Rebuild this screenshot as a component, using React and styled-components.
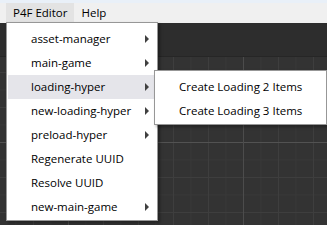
import React from "react"
import styled, { createGlobalStyle } from "styled-components"

const Global = createGlobalStyle`
  html, body {
    margin: 0;
    padding: 0;
    width: 327px;
    height: 225px;
    overflow: hidden;
    background: #333;
  }
  * { box-sizing: border-box; }
`

const Window = styled.div`
  position: relative;
  width: 327px;
  height: 225px;
  display: flex;
  flex-direction: column;
  font-family: "Segoe UI", "Open Sans", "Noto Sans", sans-serif;
  font-size: 11.5px;
  color: #000;
`
const TitleStrip = styled.div`
  height: 3px;
  background: #e9f0f8;
`
const MenuBar = styled.div`
  height: 20px;
  background: #f0f0f0;
  display: flex;
  align-items: stretch;
  padding-left: 6px;
`
const MenuButton = styled.div`
  display: flex;
  align-items: center;
  padding: 0 7px 1px 7px;
  background: ${p => (p.$open ? "#e3e3e3" : "transparent")};
`
const Toolbar = styled.div`
  height: 34px;
  background: #2d2d2d;
  border-bottom: 1px solid #262626;
`
const Canvas = styled.div`
  flex: 1;
  background-color: #333;
  background-image:
    linear-gradient(to right, #4c4c4c 1px, transparent 1px),
    linear-gradient(to bottom, #525252 1px, transparent 1px),
    linear-gradient(to right, #3e3e3e 1px, transparent 1px),
    linear-gradient(to bottom, #3e3e3e 1px, transparent 1px),
    linear-gradient(to right, #383838 1px, transparent 1px),
    linear-gradient(to bottom, #383838 1px, transparent 1px);
  background-size:
    175px 100%, 100% 175px,
    35px 100%, 100% 35px,
    17.5px 100%, 100% 17.5px;
  background-position:
    68px 0, 0 85px,
    33px 0, 0 15px,
    15.5px 0, 0 15px;
`
const Dropdown = styled.div`
  position: absolute;
  left: ${p => p.$left}px;
  top: ${p => p.$top}px;
  width: ${p => p.$width}px;
  background: #fff;
  border: 1px solid #979797;
  box-shadow: 2px 2px 3px rgba(0, 0, 0, 0.35);
  padding: 4px 1px 1px 1px;
  display: flex;
  flex-direction: column;
`
const Item = styled.div`
  height: 24px;
  display: flex;
  align-items: center;
  justify-content: space-between;
  padding: 0 7px 1px 23px;
  background: ${p => (p.$hover ? "#e5e5ea" : "transparent")};
  white-space: nowrap;
`
const Arrow = styled.span`
  width: 0;
  height: 0;
  border-top: 4px solid transparent;
  border-bottom: 4px solid transparent;
  border-left: 4px solid #404040;
`

const items = [
  { label: "asset-manager", sub: true },
  { label: "main-game", sub: true },
  { label: "loading-hyper", sub: true, hover: true },
  { label: "new-loading-hyper", sub: true },
  { label: "preload-hyper", sub: true },
  { label: "Regenerate UUID" },
  { label: "Resolve UUID" },
  { label: "new-main-game", sub: true },
]

const subItems = ["Create Loading 2 Items", "Create Loading 3 Items"]

export default function App() {
  return (
    <Window>
      <Global />
      <TitleStrip />
      <MenuBar>
        <MenuButton $open>P4F Editor</MenuButton>
        <MenuButton>Help</MenuButton>
      </MenuBar>
      <Toolbar />
      <Canvas />
      <Dropdown $left={6} $top={22} $width={152}>
        {items.map(it => (
          <Item key={it.label} $hover={it.hover}>
            <span>{it.label}</span>
            {it.sub && <Arrow />}
          </Item>
        ))}
      </Dropdown>
      <Dropdown $left={154} $top={70} $width={173}>
        {subItems.map(s => (
          <Item key={s}>
            <span>{s}</span>
          </Item>
        ))}
      </Dropdown>
    </Window>
  )
}
